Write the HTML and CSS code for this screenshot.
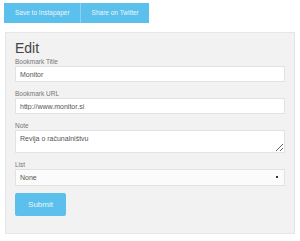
FILE: index.html
```html
<!DOCTYPE html>
<html lang="en">

<head>
    <meta charset="UTF-8">
    <meta name="viewport" content="width=device-width, initial-scale=1.0">
    <title>Edit bookmark</title>
    <link rel="stylesheet" href="styles.css">
</head>

<body>
    <nav class="akcije">
        <a href="#" class="gumb">Save to Instapaper</a>
        <a href="#" class="gumb">Share on Twitter</a>
    </nav>

    <form class="okvir">
        <h2>Edit</h2>

        <div class="polje">
            <label for="naslov">Bookmark Title</label>
            <input type="text" id="naslov" value="Monitor">
        </div>

        <div class="polje">
            <label for="url">Bookmark URL</label>
            <input type="text" id="url" value="http://www.monitor.si">
        </div>

        <div class="polje">
            <label for="opomba">Note</label>
            <textarea id="opomba">Revija o računalništvu</textarea>
        </div>

        <div class="polje">
            <label for="seznam">List</label>
            <div class="izbira">
                <select id="seznam">
                    <option>None</option>
                </select>
            </div>
        </div>

        <button type="submit" class="poslji">Submit</button>
    </form>
</body>

</html>
```

FILE: styles.css
```css
html {
    box-sizing: border-box;
}

*,
*::before,
*::after {
    box-sizing: inherit;
}

body {
    margin: 0;
    padding: 3px 5px 0 5px;
    background-color: #fff;
    font-family: "Liberation Sans", Arial, sans-serif;
    color: #666;
}

.akcije {
    display: flex;
    margin-left: -1px;
}

.gumb {
    display: block;
    height: 20px;
    line-height: 20px;
    padding: 0 10px 0 11px;
    background-color: #5bc0eb;
    color: #eaf7fd;
    font-size: 6.5px;
    text-decoration: none;
}

.gumb + .gumb {
    border-left: 1px solid #8ad2f0;
}

.okvir {
    margin: 9px 0 0 0;
    padding: 7px 9px 17px 9px;
    background-color: #f2f2f2;
    border: 1px solid #e6e6e6;
}

.okvir h2 {
    margin: 0 0 1px 0;
    font-size: 14px;
    line-height: 16px;
    font-weight: normal;
    color: #444;
}

.polje {
    margin-bottom: 7px;
}

.polje label {
    display: block;
    font-size: 6.5px;
    line-height: 9px;
    color: #777;
}

.polje input,
.polje textarea,
.polje select {
    display: block;
    width: 100%;
    margin: 0;
    padding: 0 4px;
    border: 1px solid #e2e2e2;
    background-color: #fff;
    font-family: inherit;
    font-size: 7px;
    color: #555;
    outline: none;
}

.polje input {
    height: 16px;
}

.polje textarea {
    height: 23px;
    padding-top: 4px;
    resize: vertical;
}

.izbira {
    position: relative;
}

.polje select {
    height: 17px;
    appearance: none;
    -webkit-appearance: none;
    border-radius: 0;
    background-color: #fbfbfb;
}

.izbira::after {
    content: '';
    position: absolute;
    right: 7px;
    top: 7px;
    width: 2px;
    height: 2px;
    background-color: #333;
    pointer-events: none;
}

.poslji {
    display: block;
    width: 51px;
    height: 23px;
    margin: 0;
    padding: 0;
    border: none;
    border-radius: 2px;
    background-color: #5bc0eb;
    color: #eaf7fd;
    font-family: inherit;
    font-size: 8px;
    cursor: pointer;
}
```
